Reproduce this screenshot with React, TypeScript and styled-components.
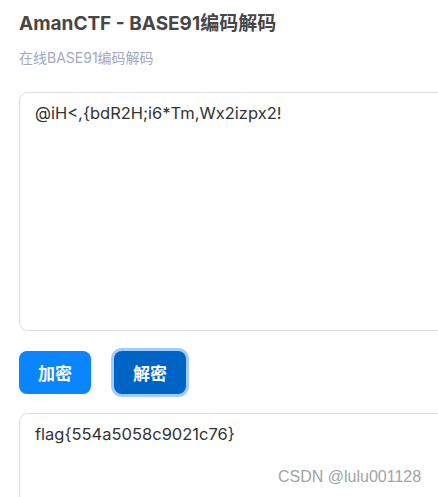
import React from "react";
import styled, { createGlobalStyle } from "styled-components";

const Global = createGlobalStyle`
  html, body { margin: 0; padding: 0; background: #fff; overflow: hidden; }
  body { font-family: Inter, "Noto Sans CJK SC", sans-serif; }
`;

const Page = styled.div`
  position: relative;
  width: 438px;
  height: 497px;
  overflow: hidden;
  padding: 12px 0 0 19px;
  box-sizing: border-box;
  display: flex;
  flex-direction: column;
`;

const Title = styled.h1`
  margin: 0;
  font-size: 19px;
  line-height: 24px;
  font-weight: 700;
  color: #464646;
  font-family: Inter, "Noto Sans CJK SC", sans-serif;
`;

const Subtitle = styled.p`
  margin: 12px 0 0;
  font-size: 14px;
  line-height: 20px;
  color: #a3a8bf;
  font-family: Inter, "Noto Sans CJK SC", sans-serif;
`;

const Box = styled.div<{ $h: number; $top: number }>`
  flex: none;
  margin-top: ${(p) => p.$top}px;
  height: ${(p) => p.$h}px;
  width: 440px;
  box-sizing: border-box;
  border: 1px solid #e0e0e0;
  border-radius: 9px;
  padding: 8px 15px;
  font-size: 16.5px;
  line-height: 24px;
  color: #333;
  font-family: Inter, "Noto Sans CJK SC", sans-serif;
`;

const Row = styled.div`
  display: flex;
  gap: 23px;
  margin-top: 20px;
  align-items: center;
`;

const Button = styled.button<{ $active?: boolean }>`
  width: 72px;
  height: 43px;
  border: none;
  border-radius: 8px;
  background: ${(p) => (p.$active ? "#0063c6" : "#0a84ff")};
  color: #fff;
  font-size: 17px;
  font-weight: 700;
  font-family: "Noto Sans CJK SC", sans-serif;
  box-shadow: ${(p) => (p.$active ? "0 0 0 3px #9fcdfb" : "none")};
  padding: 0;
  cursor: pointer;
`;

const Watermark = styled.div`
  position: absolute;
  left: 278px;
  top: 468px;
  font-family: "Liberation Sans", Arial, sans-serif;
  font-size: 16px;
  color: #a3a3a3;
`;

export default function App() {
  return (
    <>
      <Global />
      <Page>
        <Title>AmanCTF - BASE91编码解码</Title>
        <Subtitle>在线BASE91编码解码</Subtitle>
        <Box $top={24} $h={239}>@iH&lt;,{"{"}bdR2H;i6*Tm,Wx2izpx2!</Box>
        <Row>
          <Button>加密</Button>
          <Button $active>解密</Button>
        </Row>
        <Box $top={19} $h={120}>flag{"{"}554a5058c9021c76{"}"}</Box>
        <Watermark>CSDN @lulu001128</Watermark>
      </Page>
    </>
  );
}
